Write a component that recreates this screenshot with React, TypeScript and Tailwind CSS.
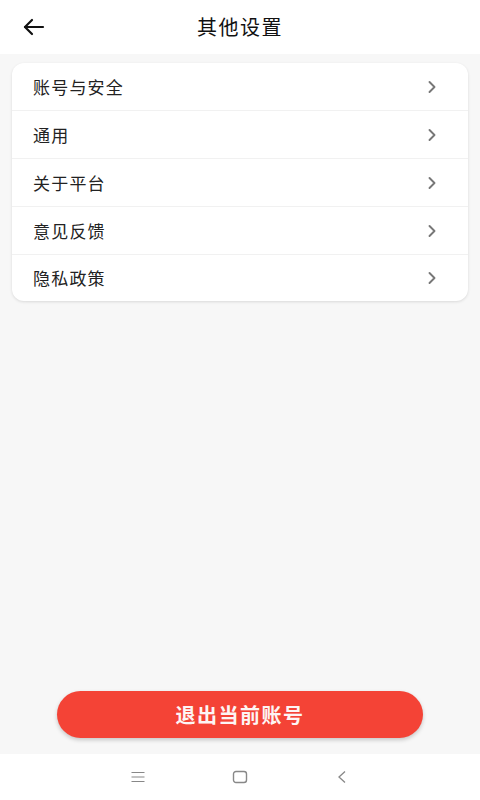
import { ChevronRight } from "lucide-react";

const ITEMS = ["账号与安全", "通用", "关于平台", "意见反馈", "隐私政策"];

const FONT = { fontFamily: '"Noto Sans CJK SC", "Noto Sans", sans-serif' };

export default function App() {
  return (
    <div className="flex h-[800px] w-[480px] flex-col bg-[#f7f7f7]" style={FONT}>
      <header className="relative flex h-[54px] shrink-0 items-center justify-center bg-white">
        <button className="absolute left-[22px] top-[15px] text-[#111]">
          <svg width="24" height="24" viewBox="0 0 24 24" fill="none" stroke="currentColor" strokeWidth="2.2" strokeLinecap="round" strokeLinejoin="round">
            <path d="M21 12H3" />
            <path d="M10 5l-7 7 7 7" />
          </svg>
        </button>
        <h1 className="text-[20px] font-normal tracking-[1.5px] text-[#111]">其他设置</h1>
      </header>

      <main className="flex-1 px-3 pt-[9px]">
        <div className="overflow-hidden rounded-[12px] bg-white shadow-[0_1px_3px_rgba(0,0,0,0.12)]">
          {ITEMS.map((label, i) => (
            <div
              key={label}
              className={
                "flex items-center justify-between pl-[21px] pr-[26px] " +
                (i < ITEMS.length - 1 ? "h-[48px] border-b border-[#f1f1f1]" : "h-[46px]")
              }
            >
              <span className="text-[17px] tracking-[1.2px] text-[#222]">{label}</span>
              <ChevronRight size={20} strokeWidth={2.3} className="text-[#777]" />
            </div>
          ))}
        </div>
      </main>

      <div className="flex shrink-0 justify-center pb-[16px]">
        <button className="flex h-[47px] w-[366px] items-center justify-center rounded-full bg-[#f44336] text-[20px] font-bold tracking-[1.5px] text-[#fdf5f4] shadow-[0_2px_4px_rgba(0,0,0,0.2)]">
          退出当前账号
        </button>
      </div>

      <nav className="flex h-[46px] shrink-0 items-center justify-center gap-[86px] bg-white">
        <svg width="16" height="14" viewBox="0 0 16 14" fill="none" stroke="#888" strokeWidth="1.2">
          <path d="M1.5 2.5h13M1.5 7h13M1.5 11.5h13" />
        </svg>
        <svg width="16" height="14" viewBox="0 0 16 14" fill="none" stroke="#888" strokeWidth="1.4">
          <rect x="1.5" y="1.5" width="13" height="11" rx="2.5" />
        </svg>
        <svg width="16" height="14" viewBox="0 0 16 14" fill="none" stroke="#888" strokeWidth="1.3">
          <path d="M11 1.5L5 7l6 5.5" />
        </svg>
      </nav>
    </div>
  );
}
